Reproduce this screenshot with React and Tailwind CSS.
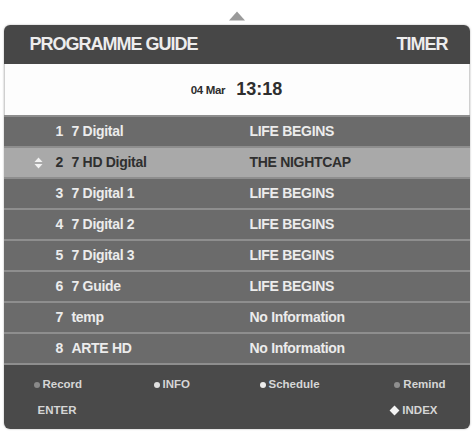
const rows = [
  { n: 1, name: "7 Digital", prog: "LIFE BEGINS" },
  { n: 2, name: "7 HD Digital", prog: "THE NIGHTCAP", active: true },
  { n: 3, name: "7 Digital 1", prog: "LIFE BEGINS" },
  { n: 4, name: "7 Digital 2", prog: "LIFE BEGINS" },
  { n: 5, name: "7 Digital 3", prog: "LIFE BEGINS" },
  { n: 6, name: "7 Guide", prog: "LIFE BEGINS" },
  { n: 7, name: "temp", prog: "No Information" },
  { n: 8, name: "ARTE HD", prog: "No Information" },
];

function UpDown() {
  return (
    <svg width="9" height="12" viewBox="0 0 9 12" className="mr-[13px]">
      <path d="M4.5 0.5 L8.5 5 L0.5 5 Z" fill="#f2f2f2" />
      <path d="M4.5 11.5 L8.5 7 L0.5 7 Z" fill="#f2f2f2" />
    </svg>
  );
}

function Key({ dot, label }) {
  return (
    <div className="flex items-center gap-[3px]">
      <span className={`w-[6px] h-[6px] rounded-full ${dot}`} />
      <span>{label}</span>
    </div>
  );
}

export default function App() {
  return (
    <div
      className="w-[473px] h-[434px] bg-white pt-[11px] flex flex-col items-center"
      style={{ fontFamily: '"Liberation Sans", Arial, sans-serif' }}
    >
      <svg width="18" height="10" viewBox="0 0 18 10">
        <path d="M9 0.5 L17 9.5 L1 9.5 Z" fill="#9a9a9a" />
      </svg>
      <div className="mt-[4px] w-[466px] rounded-[6px] overflow-hidden shadow-[0_0_2px_rgba(0,0,0,0.35)] flex flex-col">
        <div className="h-[39px] bg-[#474747] flex items-center justify-between pl-[26px] pr-[22px] font-bold text-[18px] tracking-[-1px] text-[#ededed]">
          <span>PROGRAMME GUIDE</span>
          <span>TIMER</span>
        </div>
        <div className="h-[51px] bg-[#fdfdfd] flex items-center justify-center gap-[11px] font-bold text-[#2e2e2e] border-x border-[#d0d0d0]">
          <span className="text-[11.5px] tracking-[-0.3px] pt-[3px]">04 Mar</span>
          <span className="text-[18px]">13:18</span>
        </div>
        <div className="flex flex-col bg-[#6c6c6c]">
          {rows.map((r) => (
            <div
              key={r.n}
              className={`h-[31px] flex items-center font-bold text-[14px] tracking-[-0.3px] border-t-2 border-[#8e8e8e] ${
                r.active ? "bg-[#a9a9a9] text-[#2f2f2f]" : "bg-[#6b6b6b] text-[#ececec]"
              }`}
            >
              <div className="w-[52px] flex justify-end">{r.active && <UpDown />}</div>
              <span className="w-[16px]">{r.n}</span>
              <span className="w-[178px]">{r.name}</span>
              <span>{r.prog}</span>
            </div>
          ))}
        </div>
        <div className="h-[66px] bg-[#4a4a4a] border-t-2 border-[#8e8e8e] pl-[30px] pr-[24px] pt-[11px] text-[11.5px] font-bold text-[#d6d6d6] flex flex-col gap-[9px]">
          <div className="flex items-center">
            <div className="w-[120px]"><Key dot="bg-[#8a8a8a]" label="Record" /></div>
            <div className="w-[106px]"><Key dot="bg-[#e0e0e0]" label="INFO" /></div>
            <div className="flex-1"><Key dot="bg-[#ececec]" label="Schedule" /></div>
            <Key dot="bg-[#8f8f8f]" label="Remind" />
          </div>
          <div className="flex items-center justify-between">
            <span className="pl-[4px]">ENTER</span>
            <div className="flex items-center gap-[4px] pr-[8px]">
              <span className="w-[7px] h-[7px] bg-[#f4f4f4] rotate-45" />
              <span>INDEX</span>
            </div>
          </div>
        </div>
      </div>
    </div>
  );
}
